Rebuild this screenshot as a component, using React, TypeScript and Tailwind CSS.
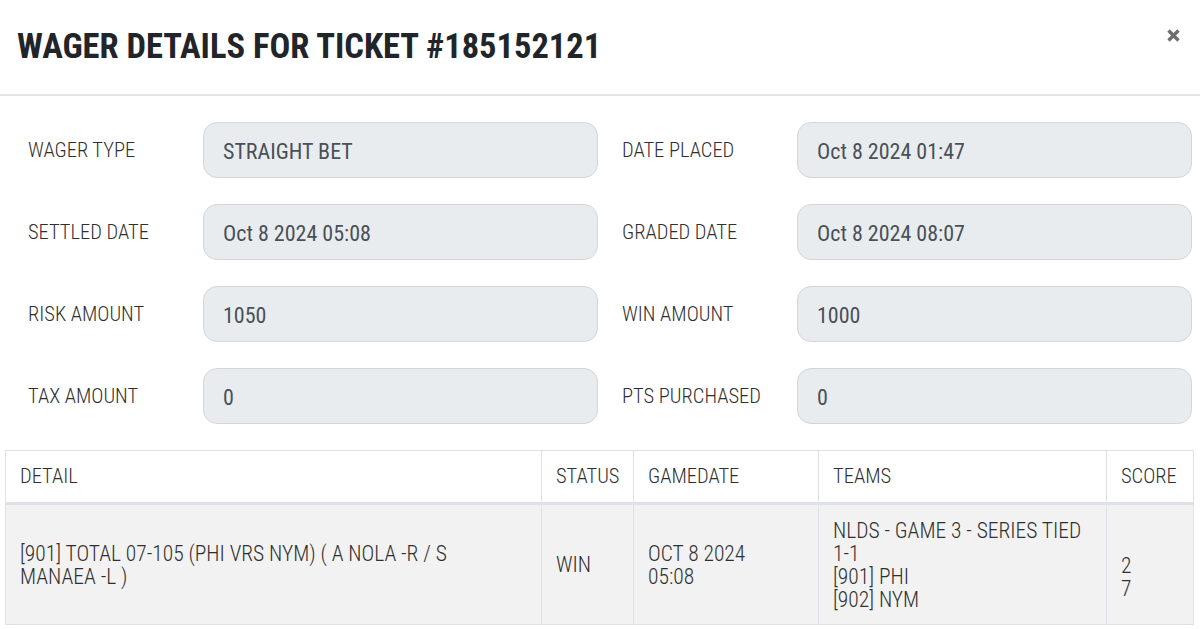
import React from "react";

const rows: [string, string, string, string][] = [
  ["WAGER TYPE", "STRAIGHT BET", "DATE PLACED", "Oct 8 2024 01:47"],
  ["SETTLED DATE", "Oct 8 2024 05:08", "GRADED DATE", "Oct 8 2024 08:07"],
  ["RISK AMOUNT", "1050", "WIN AMOUNT", "1000"],
  ["TAX AMOUNT", "0", "PTS PURCHASED", "0"],
];

function Field({ label, value }: { label: string; value: string }) {
  return (
    <div className="flex items-center">
      <div className="w-[175px] whitespace-nowrap text-[20.5px] leading-[24px] font-light text-[#2f2f2f]">{label}</div>
      <div className="w-[395px] h-[56px] rounded-[14px] border border-[#d3d6da] bg-[#e9ecef] flex items-center px-[19px] pt-[3px] text-[22px] leading-[24px] font-normal text-[#495057]">
        {value}
      </div>
    </div>
  );
}

const cell = "border border-[#dee2e6] px-[14px] align-middle";
const head = "border border-[#dee2e6] border-b-[3px] px-[14px] text-left font-light align-middle";

export default function App() {
  return (
    <div className="w-[1200px] h-[629px] bg-white overflow-hidden font-['Liberation_Sans_Narrow','Roboto_Condensed','DejaVu_Sans_Condensed',sans-serif]">
      <div className="h-[96px] border-b-2 border-[#e3e5e8] flex items-center justify-between pl-[17px] pr-[20px]">
        <h1 className="text-[34.5px] leading-[40px] font-bold text-[#212529] mt-[-3px]">
          WAGER DETAILS FOR TICKET #185152121
        </h1>
        <svg width="13" height="13" viewBox="0 0 13 13" className="mt-[-24px]">
          <path d="M1.5 1.5 L11.5 11.5 M11.5 1.5 L1.5 11.5" stroke="#6f6f6f" strokeWidth="3.4" strokeLinecap="butt" />
        </svg>
      </div>

      <div className="pt-[26px] pl-[28px] flex flex-col gap-[26px]">
        {rows.map((r) => (
          <div key={r[0]} className="flex gap-[24px]">
            <Field label={r[0]} value={r[1]} />
            <Field label={r[2]} value={r[3]} />
          </div>
        ))}
      </div>

      <div className="mt-[26px] ml-[5px] w-[1188px]">
        <table className="w-full table-fixed border-collapse text-[21.5px] leading-[23px] font-light text-[#2f2f2f]">
          <thead>
            <tr className="bg-white h-[53px] text-[20.5px]">
              <th className={`w-[536px] ${head}`}>DETAIL</th>
              <th className={`w-[92px] ${head}`}>STATUS</th>
              <th className={`w-[185px] ${head}`}>GAMEDATE</th>
              <th className={`w-[288px] ${head}`}>TEAMS</th>
              <th className={`w-[87px] ${head}`}>SCORE</th>
            </tr>
          </thead>
          <tbody>
            <tr className="bg-[#f2f2f2] h-[121px]">
              <td className={cell}>[901] TOTAL 07-105 (PHI VRS NYM) ( A NOLA -R / S MANAEA -L )</td>
              <td className={cell}>WIN</td>
              <td className={cell}>
                OCT 8 2024
                <br />
                05:08
              </td>
              <td className={cell}>
                NLDS - GAME 3 - SERIES TIED
                <br />
                1-1
                <br />
                [901] PHI
                <br />
                [902] NYM
              </td>
              <td className={`${cell} pt-[24px]`}>
                2
                <br />7
              </td>
            </tr>
          </tbody>
        </table>
      </div>
    </div>
  );
}
